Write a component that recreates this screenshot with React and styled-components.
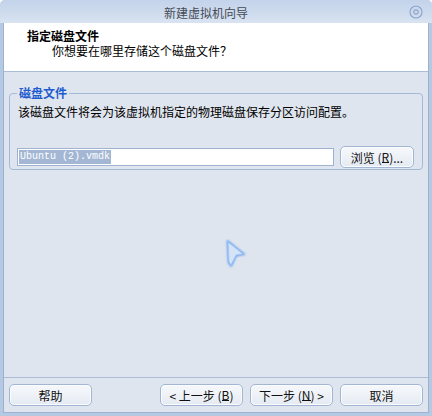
import React from "react";
import styled, { createGlobalStyle } from "styled-components";

const GlobalStyle = createGlobalStyle`
  html, body {
    margin: 0;
    padding: 0;
    background: #ffffff;
  }
  body {
    font-family: "Noto Sans CJK SC", "DejaVu Sans", sans-serif;
    font-size: 12px;
    color: #000;
  }
`;

const CloseIcon = () => (
  <svg width="14" height="14" viewBox="0 0 14 14">
    <circle cx="7" cy="7" r="6" fill="none" stroke="#8ea7cb" strokeWidth="1.2" />
    <circle cx="7" cy="7" r="2.2" fill="none" stroke="#8ea7cb" strokeWidth="1.2" />
  </svg>
);

const Pointer = () => (
  <svg width="24" height="30" viewBox="0 0 24 30">
    <defs>
      <filter id="glow" x="-50%" y="-50%" width="200%" height="200%">
        <feGaussianBlur stdDeviation="1" />
      </filter>
    </defs>
    <polygon
      points="4,3 19,15 12,16 7,26 5,23"
      fill="none"
      stroke="#5f9cf0"
      strokeWidth="2.4"
      filter="url(#glow)"
    />
    <polygon points="4,3 19,15 12,16 7,26 5,23" fill="#d4e3f8" stroke="#9cc2f5" strokeWidth="0.8" />
  </svg>
);

const App = () => (
  <React.Fragment>
    <GlobalStyle />
    <Window>
      <TitleBar>
        <Title>新建虚拟机向导</Title>
        <CloseButton>
          <CloseIcon />
        </CloseButton>
      </TitleBar>
      <Frame>
        <Header>
          <HeaderTitle>指定磁盘文件</HeaderTitle>
          <HeaderSubtitle>你想要在哪里存储这个磁盘文件？</HeaderSubtitle>
        </Header>
        <Body>
          <GroupBox>
            <Legend>磁盘文件</Legend>
            <Description>该磁盘文件将会为该虚拟机指定的物理磁盘保存分区访问配置。</Description>
            <FileRow>
              <FileInput>
                <Selected>Ubuntu (2).vmdk</Selected>
              </FileInput>
              <Button $width="74px">浏览 (<u>R</u>)...</Button>
            </FileRow>
          </GroupBox>
          <Cursor>
            <Pointer />
          </Cursor>
        </Body>
        <Footer>
          <Button $width="83px">帮助</Button>
          <Spacer />
          <Button $width="83px">&lt; 上一步 (<u>B</u>)</Button>
          <Button $width="83px">下一步 (<u>N</u>) &gt;</Button>
          <Button $width="83px">取消</Button>
        </Footer>
      </Frame>
    </Window>
  </React.Fragment>
);

export default App;

const Window = styled.div`
  width: 432px;
  height: 416px;
  box-sizing: border-box;
  display: flex;
  flex-direction: column;
  background: #b6c9e3;
  border-radius: 5px 5px 0 0;
  overflow: hidden;
`;

const TitleBar = styled.div`
  height: 23px;
  flex: none;
  display: flex;
  align-items: center;
  justify-content: center;
  position: relative;
  background: linear-gradient(to bottom, #c3d3ea 0%, #cfdcee 60%, #d9e3f1 100%);
`;

const Title = styled.div`
  color: #444a55;
  font-size: 12px;
  letter-spacing: 0px;
  margin-left: -20px;
  margin-top: 2px;
`;

const CloseButton = styled.div`
  position: absolute;
  right: 9px;
  top: 5px;
  width: 14px;
  height: 14px;
`;

const Frame = styled.div`
  flex: 1;
  margin: 0 3px 3px 3px;
  border: 1px solid #9bb1d2;
  border-top: none;
  background: #dfe5ee;
  display: flex;
  flex-direction: column;
`;

const Header = styled.div`
  height: 48px;
  flex: none;
  background: #ffffff;
  border-bottom: 1px solid #aabcd6;
  box-sizing: content-box;
  padding: 0 0 0 23px;
`;

const HeaderTitle = styled.div`
  font-weight: bold;
  line-height: 14px;
  margin-top: 6px;
`;

const HeaderSubtitle = styled.div`
  line-height: 14px;
  margin-top: 1px;
  padding-left: 25px;
`;

const Body = styled.div`
  flex: 1;
  position: relative;
  padding: 14px 5px 0 5px;
`;

const GroupBox = styled.fieldset`
  margin: 0;
  padding: 2px 8px 1px 7px;
  border: 1px solid #a5b9d6;
  border-radius: 4px;
  min-width: 0;
`;

const Legend = styled.legend`
  color: #1f5dcf;
  font-weight: bold;
  padding: 0 2px;
  margin-left: 0;
  line-height: 14px;
`;

const Description = styled.div`
  line-height: 14px;
  padding-left: 1px;
  margin-top: 3px;
`;

const FileRow = styled.div`
  display: flex;
  align-items: center;
  gap: 6px;
  margin-top: 27px;
`;

const FileInput = styled.div`
  flex: 1;
  height: 18px;
  box-sizing: border-box;
  border: 1px solid #9fb3d1;
  background: #ffffff;
  display: flex;
  align-items: center;
  padding-left: 1px;
`;

const Selected = styled.span`
  font-family: "Liberation Mono", "DejaVu Sans Mono", monospace;
  font-size: 10px;
  line-height: 14px;
  background: #a3b7d5;
  color: #ffffff;
  padding: 0 1px;
`;

const Button = styled.div`
  width: ${(p) => p.$width};
  height: 22px;
  flex: none;
  box-sizing: border-box;
  display: flex;
  align-items: center;
  justify-content: center;
  border: 1px solid #a2b6d4;
  border-radius: 5px;
  background: linear-gradient(to bottom, #f6f8fb 0%, #eef2f7 50%, #e4eaf2 100%);
  box-shadow: inset 0 0 0 1px #fbfcfe;
  color: #111;
  font-size: 12px;
  white-space: nowrap;

  u {
    text-decoration: none;
    border-bottom: 1px solid #111;
    line-height: 11px;
  }
`;

const Cursor = styled.div`
  position: absolute;
  left: 220px;
  top: 167px;
  width: 24px;
  height: 30px;
`;

const Footer = styled.div`
  flex: none;
  display: flex;
  gap: 7px;
  border-top: 1px solid #aabcd6;
  padding: 6px 5px 6px 5px;
`;

const Spacer = styled.div`
  flex: 1;
`;
